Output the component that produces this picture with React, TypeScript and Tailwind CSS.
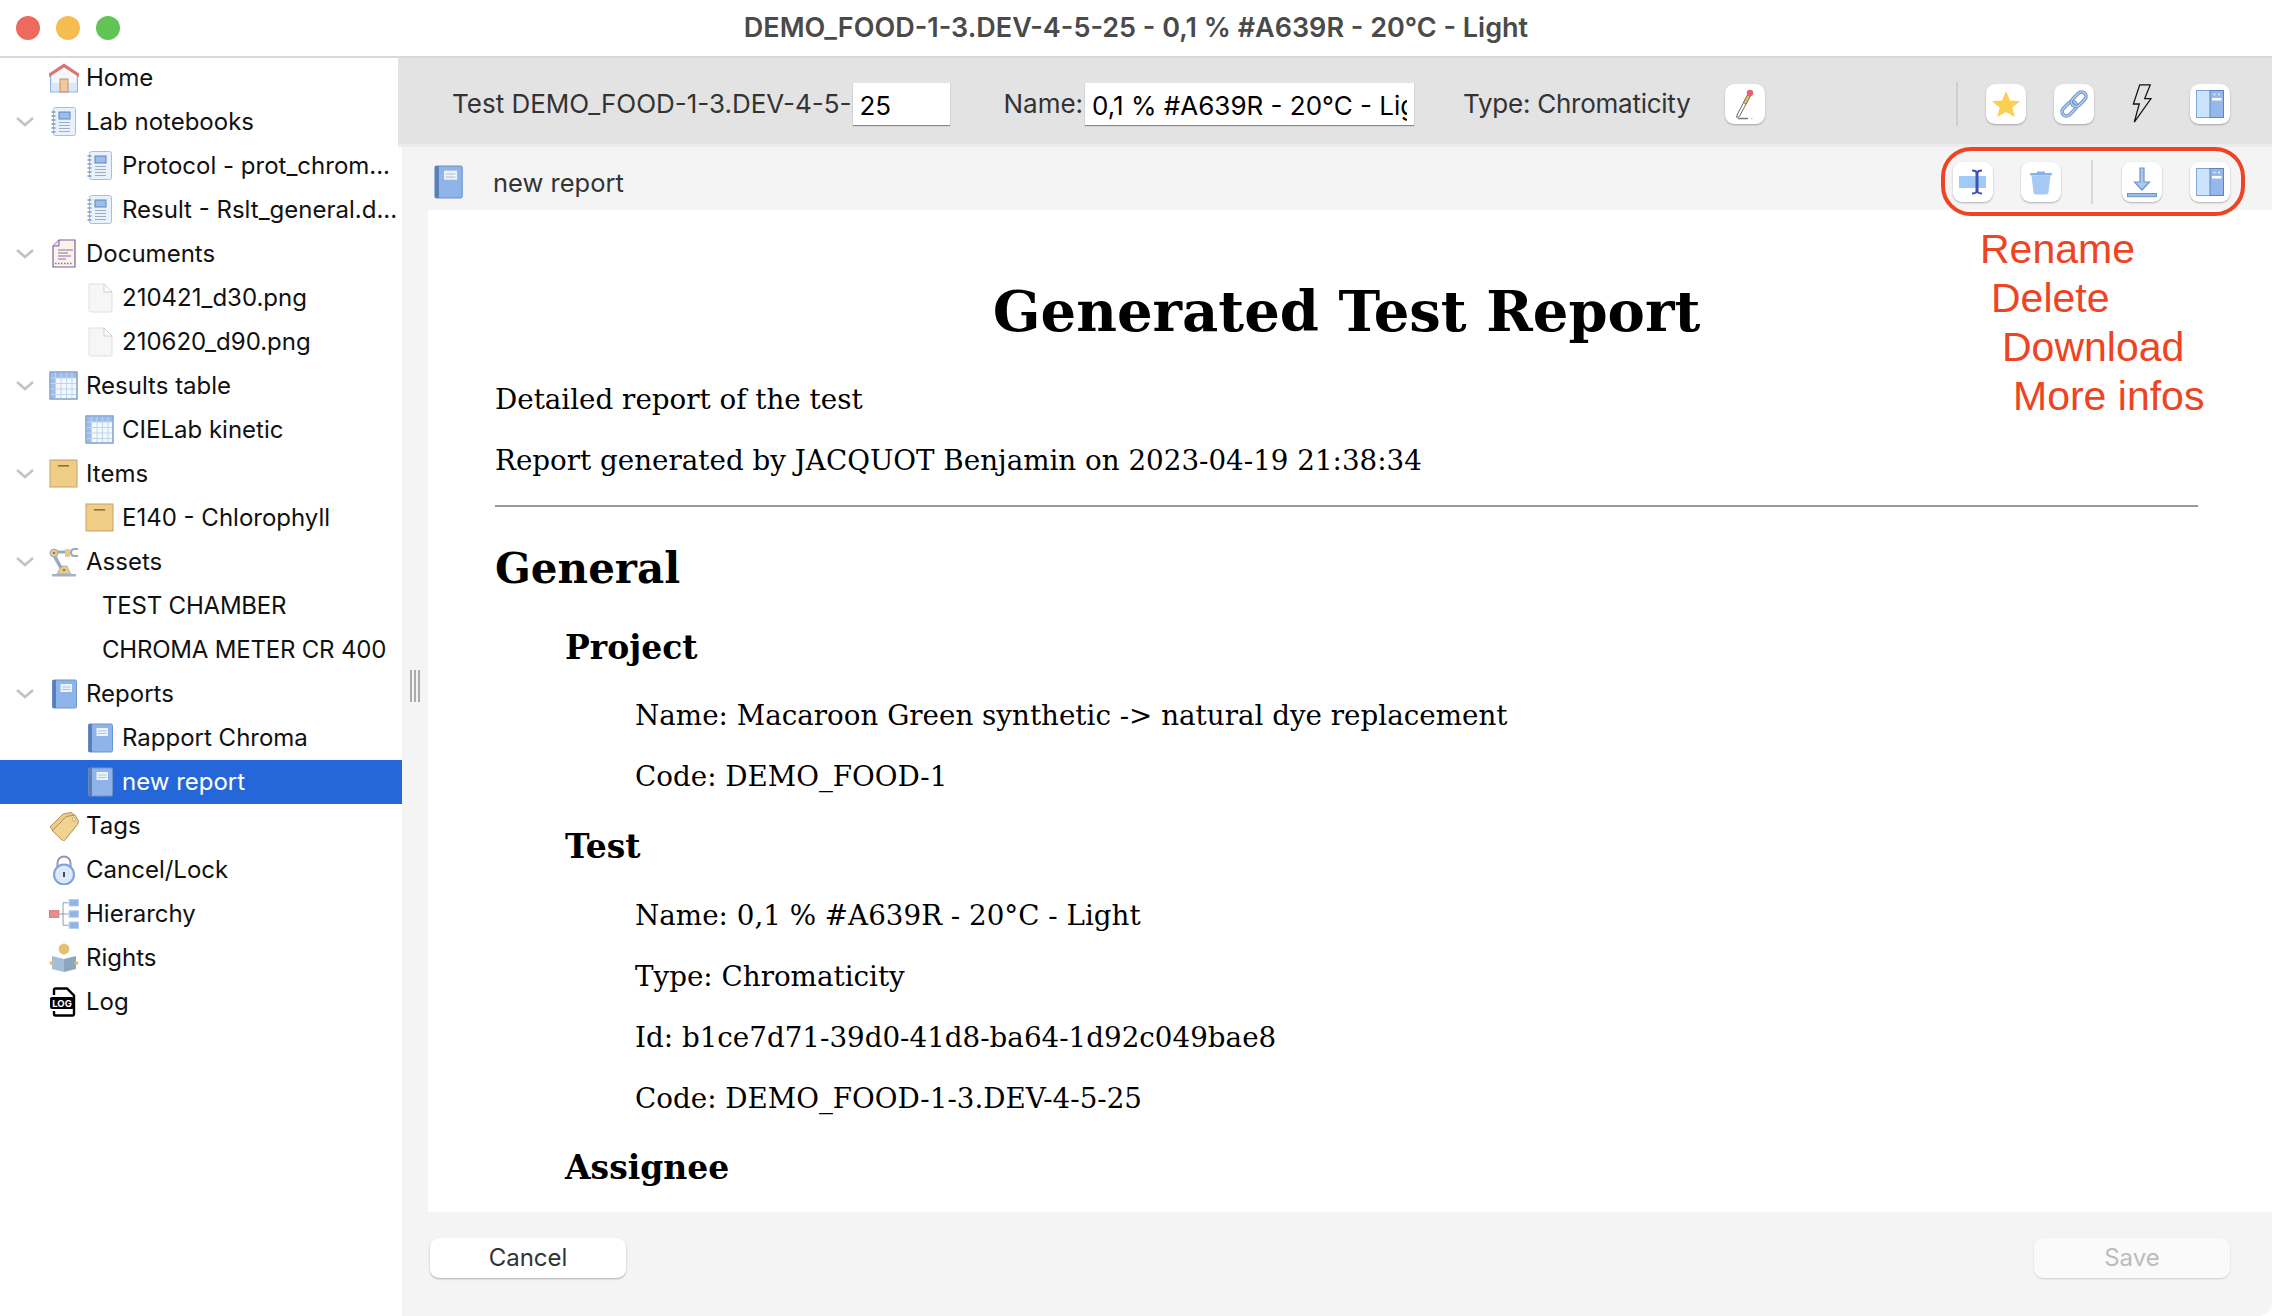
import type { ReactNode } from "react";

// Icones de l'arbre de navigation
function HomeIcon() {
  return (
    <svg width="30" height="30" viewBox="0 0 30 30">
      <rect x="1.5" y="11" width="27" height="18" fill="#d6e8fa" stroke="#8fb3de" />
      <polygon points="15,4 27,12 27,20 3,20 3,12" fill="#f4f8fd" />
      <polygon points="15,0.5 30,10.5 30,14 15,4.5 0,14 0,10.5" fill="#db7372" />
      <rect x="11" y="16" width="8" height="13" fill="#f3c79e" stroke="#c88c5e" />
    </svg>
  );
}

function NotebookIcon() {
  return (
    <svg width="30" height="30" viewBox="0 0 30 30">
      <rect x="4.5" y="0.5" width="22" height="28" rx="2" fill="#e9f2fc" stroke="#a3c0e4" />
      <rect x="10" y="5" width="11" height="7" fill="#9dbdec" stroke="#5f84bb" />
      <path d="M10 15.5h11M10 18.5h11M10 21.5h11M10 24.5h11" stroke="#9fadc0" strokeWidth="1" />
      <path d="M2.5 5h4M2.5 9h4M2.5 13h4M2.5 17h4M2.5 21h4M2.5 25h4" stroke="#7f9cc4" strokeWidth="1.3" />
    </svg>
  );
}

function DocumentIcon() {
  return (
    <svg width="30" height="30" viewBox="0 0 30 30">
      <path d="M10 1h16v27H4V7z" fill="#fdf3e6" stroke="#7d5f9e" strokeWidth="1.2" />
      <path d="M10 1v6H4" fill="#e8e0ef" stroke="#7d5f9e" strokeWidth="1" />
      <path d="M9 11h15M9 14h10M9 17h13M9 20h8" stroke="#8a6fa8" strokeWidth="1" />
      <path d="M6 24.5h18" stroke="#8a6fa8" strokeWidth="1.4" strokeDasharray="1.5 1.5" />
    </svg>
  );
}

function FileIcon() {
  return (
    <svg width="30" height="30" viewBox="0 0 30 30">
      <path d="M4 1h15l8 8v18a2 2 0 0 1-2 2H6a2 2 0 0 1-2-2z" fill="#f6f6f6" stroke="#e0e0e0" />
      <path d="M19 1v8h8z" fill="#ffffff" stroke="#cfcfcf" />
    </svg>
  );
}

function TableIcon() {
  return (
    <svg width="30" height="30" viewBox="0 0 30 30">
      <rect x="1" y="1" width="27" height="27" fill="#f3f8fd" stroke="#7f9fcb" />
      <rect x="1" y="1" width="27" height="6" fill="#9cbcea" />
      <rect x="1" y="1" width="5.5" height="27" fill="#9cbcea" />
      <path d="M6.5 1v27M12 1v27M17.5 1v27M23 1v27M1 7h27M1 12.5h27M1 18h27M1 23.5h27" stroke="#c0d4ee" strokeWidth="1" />
      <rect x="1" y="1" width="27" height="27" fill="none" stroke="#7f9fcb" />
    </svg>
  );
}

function BoxIcon() {
  return (
    <svg width="30" height="30" viewBox="0 0 30 30">
      <rect x="1" y="1" width="27" height="27" fill="#f0cd87" stroke="#c6a268" />
      <rect x="9" y="6" width="11" height="1.6" fill="#8d7040" />
    </svg>
  );
}

function RobotIcon() {
  return (
    <svg width="30" height="30" viewBox="0 0 30 30">
      <rect x="3" y="27" width="24" height="2.5" fill="#9fb3d0" />
      <polygon points="8,27 22,27 18,19 12,19" fill="#e9cb7e" stroke="#9aa9c2" strokeWidth="0.7" />
      <path d="M5 8l7 13" stroke="#9aa9c2" strokeWidth="3.6" />
      <path d="M6 5h14" stroke="#9aa9c2" strokeWidth="3" />
      <circle cx="5" cy="6" r="4" fill="#e9cb7e" stroke="#9aa9c2" />
      <circle cx="5" cy="6" r="1.2" fill="#6f7f98" />
      <rect x="16" y="2" width="5" height="8" fill="#e9cb7e" />
      <path d="M29 2h-4a3.5 3.5 0 0 0-3 3v1a3.5 3.5 0 0 0 3 3h4" fill="none" stroke="#9aa9c2" strokeWidth="2" />
      <circle cx="15" cy="23" r="1.3" fill="#6f7f98" />
    </svg>
  );
}

function ReportIcon({ size = 30 }: { size?: number }) {
  return (
    <svg width={size} height={size} viewBox="0 0 30 30">
      <rect x="3.5" y="1" width="24" height="28" rx="1.5" fill="#8fb4ea" stroke="#6f94cb" />
      <rect x="3.5" y="1" width="3.5" height="28" fill="#5a7fb8" />
      <rect x="11.5" y="5" width="11.5" height="8" fill="#eef3fb" />
      <path d="M13 8h8.5M13 10.5h8.5" stroke="#a9bfdf" strokeWidth="0.9" />
    </svg>
  );
}

function TagIcon() {
  return (
    <svg width="30" height="30" viewBox="0 0 30 30">
      <path d="M1 16L14 3l8-1.5 4 3L13 29z" fill="#f0cd87" stroke="#ad8e58" strokeWidth="1" />
      <path d="M4 19L17 5.5l9-1.5 3.5 6-1 3.5L15.5 29.5a1.5 1.5 0 0 1-2 0L3 19.5z" fill="#f2d291" stroke="#ad8e58" strokeWidth="1" />
      <circle cx="25" cy="8.5" r="1.6" fill="#fff" stroke="#ad8e58" strokeWidth="0.8" />
    </svg>
  );
}

function LockIcon() {
  return (
    <svg width="30" height="30" viewBox="0 0 30 30">
      <path d="M8.5 14V8a6.5 6.5 0 0 1 13 0v6" fill="none" stroke="#8a99b0" strokeWidth="2" />
      <circle cx="15" cy="19.5" r="10" fill="#dceafa" stroke="#7ba2dc" strokeWidth="2" />
      <rect x="14" y="17" width="2" height="5" fill="#3d4d63" />
    </svg>
  );
}

function HierarchyIcon() {
  return (
    <svg width="32" height="32" viewBox="0 0 32 32">
      <path d="M11 16h10M15 4v24M15 4h6M15 28h6" stroke="#8b99ad" strokeWidth="1" fill="none" />
      <rect x="0.5" y="12.5" width="10" height="7" fill="#ea8f8f" stroke="#cf7272" />
      <rect x="21.5" y="0.5" width="10" height="7" fill="#8fb4ea" stroke="#b7cfee" />
      <rect x="21.5" y="12.5" width="10" height="7" fill="#8fb4ea" stroke="#b7cfee" />
      <rect x="21.5" y="24.5" width="10" height="7" fill="#8fb4ea" stroke="#b7cfee" />
    </svg>
  );
}

function RightsIcon() {
  return (
    <svg width="30" height="30" viewBox="0 0 30 30">
      <circle cx="15" cy="6" r="5.4" fill="#e5c06f" />
      <polygon points="3,13 15,16 15,29 3,26" fill="#a3bed6" />
      <polygon points="27,13 15,16 15,29 27,26" fill="#8ba6bf" />
      <circle cx="2.5" cy="20" r="2" fill="#e5c06f" />
      <circle cx="27.5" cy="20" r="2" fill="#e5c06f" />
    </svg>
  );
}

function LogIcon() {
  return (
    <svg width="30" height="30" viewBox="0 0 30 30">
      <path d="M5 8V3a1.5 1.5 0 0 1 1.5-1.5H18l7 7V27a1.5 1.5 0 0 1-1.5 1.5h-17A1.5 1.5 0 0 1 5 27v-3" fill="#fff" stroke="#000" strokeWidth="2.4" />
      <rect x="1" y="10" width="24" height="12" rx="2" fill="#000" />
      <text x="13" y="20" textAnchor="middle" fill="#fff" fontSize="9.5" fontWeight="700" fontFamily="Inter, sans-serif">LOG</text>
    </svg>
  );
}

function Chevron() {
  return (
    <svg width="18" height="10" viewBox="0 0 18 10">
      <path d="M1 1l8 7 8-7" fill="none" stroke="#c2c2c2" strokeWidth="2.6" />
    </svg>
  );
}

// Icones des barres d'outils
function StarIcon() {
  return (
    <svg width="30" height="30" viewBox="0 0 30 30">
      <polygon points="15,2 19,11.5 29,12.2 21.3,18.6 23.8,28 15,23 6.2,28 8.7,18.6 1,12.2 11,11.5" fill="#fbcf50" />
    </svg>
  );
}

function LinkIcon() {
  return (
    <svg width="32" height="32" viewBox="0 0 36 36">
      <g transform="rotate(-45 18 18)" fill="none">
        <rect x="1" y="13" width="19" height="10" rx="5" stroke="#6f94cb" strokeWidth="4" />
        <rect x="1" y="13" width="19" height="10" rx="5" stroke="#b8d2f3" strokeWidth="1.6" />
        <rect x="16" y="13" width="19" height="10" rx="5" stroke="#6f94cb" strokeWidth="4" />
        <rect x="16" y="13" width="19" height="10" rx="5" stroke="#b8d2f3" strokeWidth="1.6" />
      </g>
    </svg>
  );
}

function BoltIcon() {
  return (
    <svg width="20" height="44" viewBox="0 0 22 44">
      <path d="M8.5 1H20l-6 15h7L2.5 42 8 22H1.5z" fill="#e3e3e3" stroke="#111" strokeWidth="1.4" />
    </svg>
  );
}

function PanelIcon() {
  return (
    <svg width="30" height="30" viewBox="0 0 30 30">
      <rect x="1.5" y="1.5" width="27" height="27" fill="#cce4fb" stroke="#7fa4d8" />
      <rect x="15" y="1.5" width="13.5" height="27" fill="#94b8ec" stroke="#5f84bb" />
      <rect x="17" y="9" width="9.5" height="2.5" fill="#fff" />
      <circle cx="19.5" cy="5.5" r="1" fill="#e9f1fb" />
      <circle cx="24" cy="5.5" r="1" fill="#e9f1fb" />
    </svg>
  );
}

function PencilIcon() {
  return (
    <svg width="24" height="32" viewBox="0 0 24 32">
      <path d="M4 27L14.5 7l2.6 1.4L6.5 28.3l-2.8 1.2z" fill="#fbfbfb" stroke="#5b5b5b" strokeWidth="0.9" />
      <path d="M10.5 14.6l4-7.6 2.6 1.4-4 7.6z" fill="#f2c84e" stroke="#5b5b5b" strokeWidth="0.7" />
      <circle cx="17" cy="5" r="3.2" fill="#ea5f70" />
      <path d="M5 30.5h10" stroke="#7a7a7a" strokeWidth="1.5" />
      <path d="M18 30.5h1.5" stroke="#b5b5b5" strokeWidth="1.2" />
    </svg>
  );
}

function RenameIcon() {
  return (
    <svg width="40" height="40" viewBox="0 0 40 40">
      <rect x="6" y="14" width="27" height="12" fill="#9fcbf6" />
      <path d="M24 10v20" stroke="#3f52b3" strokeWidth="3" fill="none" />
      <path d="M19 8.5c2 0 4 .3 5 2 1-1.7 3-2 5-2M19 31.5c2 0 4-.3 5-2 1 1.7 3 2 5 2" stroke="#3f52b3" strokeWidth="2" fill="none" />
    </svg>
  );
}

function TrashIcon() {
  return (
    <svg width="40" height="40" viewBox="0 0 40 40">
      <path d="M9 11h22l-.5 2.5h-21z" fill="#85b0e8" />
      <path d="M16 9.5h8v1.5h-8z" fill="#85b0e8" />
      <path d="M10.5 13.5h19l-2 17a2.5 2.5 0 0 1-2.5 2H15a2.5 2.5 0 0 1-2.5-2z" fill="#a6caf4" />
    </svg>
  );
}

function DownloadIcon() {
  return (
    <svg width="40" height="40" viewBox="0 0 40 40">
      <path d="M18 6h4v14h5.5L20 28l-7.5-8H18z" fill="#a9c9f1" stroke="#6f94cb" strokeWidth="1.2" />
      <rect x="5.5" y="31.5" width="29" height="3.2" fill="#9dbce8" stroke="#6f94cb" strokeWidth="1" />
    </svg>
  );
}

function IconButton({ children, className = "" }: { children: ReactNode; className?: string }) {
  return (
    <div className={`flex h-[40px] w-[40px] items-center justify-center rounded-[9px] bg-white shadow-[0_1px_2px_rgba(0,0,0,0.28)] ${className}`}>
      {children}
    </div>
  );
}

type TreeRow = {
  label: string;
  icon?: ReactNode;
  open?: boolean;
  depth?: number;
  plain?: boolean;
  selected?: boolean;
};

const rows: TreeRow[] = [
  { label: "Home", icon: <HomeIcon /> },
  { label: "Lab notebooks", icon: <NotebookIcon />, open: true },
  { label: "Protocol - prot_chrom...", icon: <NotebookIcon />, depth: 1 },
  { label: "Result - Rslt_general.d...", icon: <NotebookIcon />, depth: 1 },
  { label: "Documents", icon: <DocumentIcon />, open: true },
  { label: "210421_d30.png", icon: <FileIcon />, depth: 1 },
  { label: "210620_d90.png", icon: <FileIcon />, depth: 1 },
  { label: "Results table", icon: <TableIcon />, open: true },
  { label: "CIELab kinetic", icon: <TableIcon />, depth: 1 },
  { label: "Items", icon: <BoxIcon />, open: true },
  { label: "E140 - Chlorophyll", icon: <BoxIcon />, depth: 1 },
  { label: "Assets", icon: <RobotIcon />, open: true },
  { label: "TEST CHAMBER", plain: true },
  { label: "CHROMA METER CR 400", plain: true },
  { label: "Reports", icon: <ReportIcon />, open: true },
  { label: "Rapport Chroma", icon: <ReportIcon />, depth: 1 },
  { label: "new report", icon: <ReportIcon />, depth: 1, selected: true },
  { label: "Tags", icon: <TagIcon /> },
  { label: "Cancel/Lock", icon: <LockIcon /> },
  { label: "Hierarchy", icon: <HierarchyIcon /> },
  { label: "Rights", icon: <RightsIcon /> },
  { label: "Log", icon: <LogIcon /> },
];

function Row({ row }: { row: TreeRow }) {
  const color = row.selected ? "bg-[#2567d9] text-white" : "text-[#111]";
  if (row.plain) {
    return (
      <div className={`flex h-[44px] items-center whitespace-nowrap pl-[102px] tracking-[-0.2px] ${color}`}>{row.label}</div>
    );
  }
  return (
    <div className={`flex h-[44px] items-center whitespace-nowrap ${color} ${row.depth ? "pl-[85px]" : "pl-[49px]"}`}>
      {row.open && (
        <span className="-ml-[33px] mr-[15px] flex w-[18px] items-center">
          <Chevron />
        </span>
      )}
      <span className="mr-[7px] flex w-[30px] items-center justify-center">{row.icon}</span>
      {row.label}
    </div>
  );
}

function Para({ children, className = "" }: { children: ReactNode; className?: string }) {
  return <p className={`text-[27.75px] leading-[34px] ${className}`}>{children}</p>;
}

export default function App() {
  return (
    <div className="relative flex h-[1316px] w-[2272px] flex-col overflow-hidden bg-white font-['Inter',sans-serif] text-[24px]">
      {/* Barre de titre */}
      <div className="grid h-[58px] shrink-0 grid-cols-[1fr_auto_1fr] items-center border-b-2 border-[#d9d9d9] px-[16px]">
        <div className="flex gap-[16px]">
          <span className="h-[24px] w-[24px] rounded-full bg-[#ee6a5f]" />
          <span className="h-[24px] w-[24px] rounded-full bg-[#f5bd4f]" />
          <span className="h-[24px] w-[24px] rounded-full bg-[#61c454]" />
        </div>
        <div className="text-[27px] font-semibold text-[#4a4a4a]">DEMO_FOOD-1-3.DEV-4-5-25 - 0,1 % #A639R - 20°C - Light</div>
        <div />
      </div>

      <div className="flex min-h-0 flex-1">
        {/* Arbre de navigation */}
        <div className="-mt-[2px] w-[402px] shrink-0">
          {rows.map((row) => (
            <Row key={row.label} row={row} />
          ))}
        </div>

        <div className="flex min-w-0 flex-1 flex-col rounded-br-[14px] bg-[#f4f4f4]">
          {/* Barre du test */}
          <div className="-ml-[4px] box-content flex h-[81px] shrink-0 items-center border-b-[3px] border-[#ececec] bg-[#e3e3e3] pl-[54px] pr-[42px] pt-[5px] text-[26px] text-[#333]">
            <span className="whitespace-nowrap">Test DEMO_FOOD-1-3.DEV-4-5-</span>
            <input readOnly value="25" className="ml-[2px] h-[42px] w-[97px] bg-white px-[6px] pt-[4px] text-black shadow-[0_1px_1px_rgba(0,0,0,0.4)] outline-none" />
            <span className="ml-[53px]">Name:</span>
            <input readOnly value="0,1 % #A639R - 20°C - Light" className="ml-[2px] h-[42px] w-[329px] bg-white px-[7px] pt-[4px] text-black shadow-[0_1px_1px_rgba(0,0,0,0.4)] outline-none" />
            <span className="ml-[49px] whitespace-nowrap tracking-[-0.25px]">Type: Chromaticity</span>
            <IconButton className="ml-[34px]">
              <PencilIcon />
            </IconButton>
            <div className="ml-auto h-[44px] w-[2px] bg-[#cfcfcf]" />
            <IconButton className="ml-[28px]">
              <StarIcon />
            </IconButton>
            <IconButton className="ml-[28px]">
              <LinkIcon />
            </IconButton>
            <span className="ml-[38px] flex w-[20px] justify-center">
              <BoltIcon />
            </span>
            <IconButton className="ml-[38px]">
              <PanelIcon />
            </IconButton>
          </div>

          {/* Barre du rapport */}
          <div className="relative flex h-[63px] shrink-0 items-center pl-[29px] pr-[42px] pt-[6px] text-[25.5px] text-[#333]">
            <ReportIcon size={34} />
            <span className="ml-[28px] mt-[4px]">new report</span>
            <IconButton className="ml-auto">
              <RenameIcon />
            </IconButton>
            <IconButton className="ml-[28px]">
              <TrashIcon />
            </IconButton>
            <div className="ml-[30px] h-[44px] w-[2px] bg-[#d8d8d8]" />
            <IconButton className="ml-[29px]">
              <DownloadIcon />
            </IconButton>
            <IconButton className="ml-[28px]">
              <PanelIcon />
            </IconButton>
            {/* Annotation rouge */}
            <div className="absolute right-[27px] top-0 h-[69px] w-[304px] rounded-[30px] border-[4px] border-[#ee4423]" />
          </div>

          {/* Rapport */}
          <div className="flex min-h-0 flex-1">
            <div className="w-[26px] shrink-0 pl-[8px] pt-[460px]">
              <div className="flex h-[32px] gap-[2px]">
                <span className="w-[2px] bg-[#aaaaaa]" />
                <span className="w-[2px] bg-[#aaaaaa]" />
                <span className="w-[2px] bg-[#aaaaaa]" />
              </div>
            </div>
            <div className="min-w-0 flex-1 overflow-hidden bg-white pl-[67px] pr-[74px] pt-[73px] font-['DejaVu_Serif',serif] text-black">
              <h1 className="text-center text-[56px] font-bold leading-[56px]">Generated Test Report</h1>
              <Para className="mt-[44px]">Detailed report of the test</Para>
              <Para className="mt-[27px]">Report generated by JACQUOT Benjamin on 2023-04-19 21:38:34</Para>
              <div className="mt-[27px] h-[2px] bg-[#999999]" />
              <h2 className="mt-[38px] text-[42px] font-bold leading-[48px]">General</h2>
              <div className="pl-[70px]">
                <h3 className="mt-[35px] text-[33px] font-bold leading-[40px]">Project</h3>
                <div className="pl-[70px]">
                  <Para className="mt-[31px]">Name: Macaroon Green synthetic -&gt; natural dye replacement</Para>
                  <Para className="mt-[27px]">Code: DEMO_FOOD-1</Para>
                </div>
                <h3 className="mt-[33px] text-[33px] font-bold leading-[40px]">Test</h3>
                <div className="pl-[70px]">
                  <Para className="mt-[32px]">Name: 0,1 % #A639R - 20°C - Light</Para>
                  <Para className="mt-[27px]">Type: Chromaticity</Para>
                  <Para className="mt-[27px]">Id: b1ce7d71-39d0-41d8-ba64-1d92c049bae8</Para>
                  <Para className="mt-[27px]">Code: DEMO_FOOD-1-3.DEV-4-5-25</Para>
                </div>
                <h3 className="mt-[32px] text-[33px] font-bold leading-[40px]">Assignee</h3>
              </div>
            </div>
          </div>

          {/* Boutons */}
          <div className="flex h-[104px] shrink-0 items-start justify-between pl-[28px] pr-[42px] pt-[26px]">
            <button className="h-[40px] w-[196px] rounded-[9px] bg-white text-[#333] shadow-[0_1px_2px_rgba(0,0,0,0.3)]">Cancel</button>
            <button className="h-[40px] w-[196px] rounded-[9px] bg-[#fafafa] text-[#bcbcbc] shadow-[0_1px_2px_rgba(0,0,0,0.15)]">Save</button>
          </div>
        </div>
      </div>

      {/* Legende des boutons */}
      <div className="absolute left-[1980px] top-[225px] font-['Liberation_Sans',sans-serif] text-[41px] leading-[49px] text-[#ee4423]">
        <div>Rename</div>
        <div className="ml-[11px]">Delete</div>
        <div className="ml-[22px]">Download</div>
        <div className="ml-[33px]">More infos</div>
      </div>
    </div>
  );
}
